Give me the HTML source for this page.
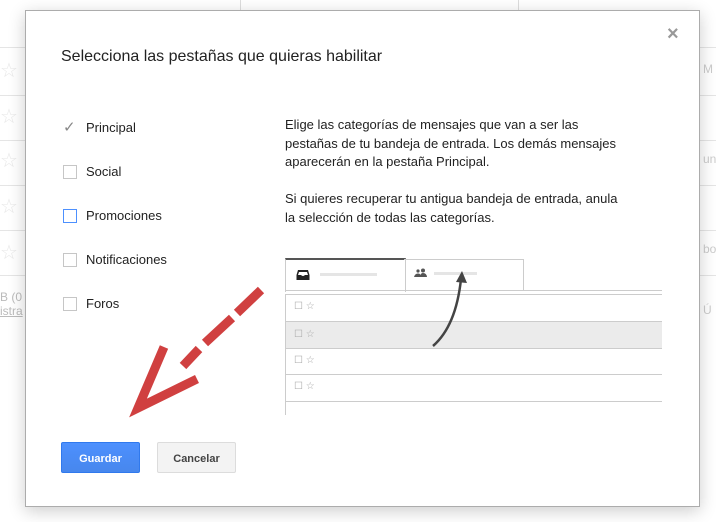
<!DOCTYPE html>
<html><head><meta charset="utf-8"><style>
body{margin:0;width:716px;height:522px;overflow:hidden;background:#fff;font-family:"Liberation Sans",Arial,sans-serif;position:relative}
.a{position:absolute}
.bgl{position:absolute;left:0;height:1px;background:#e5e5e5}
.star{position:absolute;color:#e8e8e8;font-size:20px}
.dlg{position:absolute;left:25px;top:10px;width:673px;height:495px;background:#fff;border:1px solid #acacac;box-shadow:0 4px 16px rgba(0,0,0,.2)}
.t{font-size:13px;color:#222}
.cb{position:absolute;width:12px;height:12px;border:1px solid #c6c6c6;background:#fff}
.lbl{position:absolute;font-size:13px;color:#222}
.btn{position:absolute;top:431px;height:29px;border-radius:2px;font-size:11px;font-weight:bold;text-align:center;line-height:33px}
.row{position:absolute;left:259px;width:377px;height:1px;background:#ccc}
.rc{position:absolute;font-size:10px;color:#aaa}
</style></head><body>
<div class="bgl" style="top:47px;width:716px"></div>
<div class="bgl" style="top:95px;width:716px"></div>
<div class="bgl" style="top:140px;width:716px"></div>
<div class="bgl" style="top:185px;width:716px"></div>
<div class="bgl" style="top:230px;width:716px"></div>
<div class="bgl" style="top:275px;width:716px"></div>
<div class="a" style="left:240px;top:0;width:1px;height:10px;background:#ddd"></div>
<div class="a" style="left:518px;top:0;width:1px;height:10px;background:#ddd"></div>
<div class="star" style="left:0;top:58px">☆</div>
<div class="star" style="left:0;top:104px">☆</div>
<div class="star" style="left:0;top:148px">☆</div>
<div class="star" style="left:0;top:194px">☆</div>
<div class="star" style="left:0;top:240px">☆</div>
<div class="a" style="left:0;top:290px;font-size:12px;color:#bbb">B (0<br><u>istra</u></div>
<div class="a" style="left:703px;top:62px;font-size:12px;color:#ccc">M</div>
<div class="a" style="left:703px;top:152px;font-size:12px;color:#ccc">unt</div>
<div class="a" style="left:703px;top:242px;font-size:12px;color:#ccc">bo</div>
<div class="a" style="left:703px;top:303px;font-size:12px;color:#ccc">Ú</div>
<div class="dlg">
<div class="a" style="left:641px;top:12px;font-size:20px;color:#999;font-weight:bold">×</div>
<div class="a" style="left:35px;top:37px;font-size:16px;color:#222">Selecciona las pestañas que quieras habilitar</div>
<div class="a" style="left:37px;top:107px;font-size:15px;color:#888">✓</div>
<div class="lbl" style="left:60px;top:109px">Principal</div>
<div class="cb" style="left:37px;top:154px"></div><div class="lbl" style="left:60px;top:153px">Social</div>
<div class="cb" style="left:37px;top:198px;border-color:#4d90fe"></div><div class="lbl" style="left:60px;top:197px">Promociones</div>
<div class="cb" style="left:37px;top:242px"></div><div class="lbl" style="left:60px;top:241px">Notificaciones</div>
<div class="cb" style="left:37px;top:286px"></div><div class="lbl" style="left:60px;top:285px">Foros</div>
<div class="a t" style="left:259px;top:105px;width:345px;line-height:18.5px">Elige las categorías de mensajes que van a ser las<br>pestañas de tu bandeja de entrada. Los demás mensajes aparecerán en la pestaña Principal.<br><br>Si quieres recuperar tu antigua bandeja de entrada, anula la selección de todas las categorías.</div>
<div class="a" style="left:259px;top:247px;width:119px;height:32px;border-top:2px solid #555;border-right:1px solid #ccc;border-left:1px solid #ccc;background:#fff"></div>
<div class="a" style="left:378px;top:248px;width:119px;height:31px;border:1px solid #ccc;border-left:none;border-bottom:none"></div>
<svg class="a" style="left:270px;top:258px" width="14" height="12"><path d="M2 1 H12 L13.5 6 V11 H0.5 V6 Z" fill="#222"/><path d="M3 3 H11 L12 6 H9 Q7 8 5 6 H2 Z" fill="#fff"/></svg>
<div class="a" style="left:294px;top:262px;width:57px;height:3px;background:#e5e5e5"></div>
<svg class="a" style="left:388px;top:257px" width="14" height="10"><circle cx="4" cy="3" r="1.6" fill="#555"/><circle cx="9" cy="2.5" r="2" fill="#555"/><path d="M0 9 Q1 5.5 4 5.5 Q6 5.5 6.5 7 Q7 5 9 5 Q12.5 5 13 9 Z" fill="#555"/></svg>
<div class="a" style="left:408px;top:261px;width:43px;height:3px;background:#e5e5e5"></div>
<div class="a" style="left:259px;top:279px;width:377px;height:1px;background:#ccc"></div>
<div class="row" style="top:283px"></div>
<div class="a" style="left:259px;top:310px;width:377px;height:27px;background:#ebebeb"></div>
<div class="row" style="top:310px"></div>
<div class="row" style="top:337px"></div>
<div class="row" style="top:363px"></div>
<div class="row" style="top:390px"></div>
<div class="a" style="left:259px;top:283px;width:1px;height:121px;background:#ccc"></div>
<div class="rc" style="left:268px;top:290px">☐ ☆</div>
<div class="rc" style="left:268px;top:318px">☐ ☆</div>
<div class="rc" style="left:268px;top:344px">☐ ☆</div>
<div class="rc" style="left:268px;top:370px">☐ ☆</div>
<svg class="a" style="left:0;top:0" width="673" height="495">
<path d="M407 335 Q430 315 435 268" stroke="#444" stroke-width="2.5" fill="none"/>
<path d="M430 271 L436 260 L441 272 Z" fill="#444"/>
<g stroke="#d04040" stroke-width="9" fill="none">
<path d="M235 279 L211 302 M206 307 L179 332 M173 338 L157 355"/>
<path d="M138 336 L112 397 L171 368"/>
</g>
</svg>
<div class="btn" style="left:35px;width:77px;border:1px solid #3079ed;color:#fff;background:linear-gradient(#4d90fe,#4787ed)">Guardar</div>
<div class="btn" style="left:131px;width:77px;background:#f3f3f3;border:1px solid #dcdcdc;color:#444">Cancelar</div>
</div>
</body></html>
